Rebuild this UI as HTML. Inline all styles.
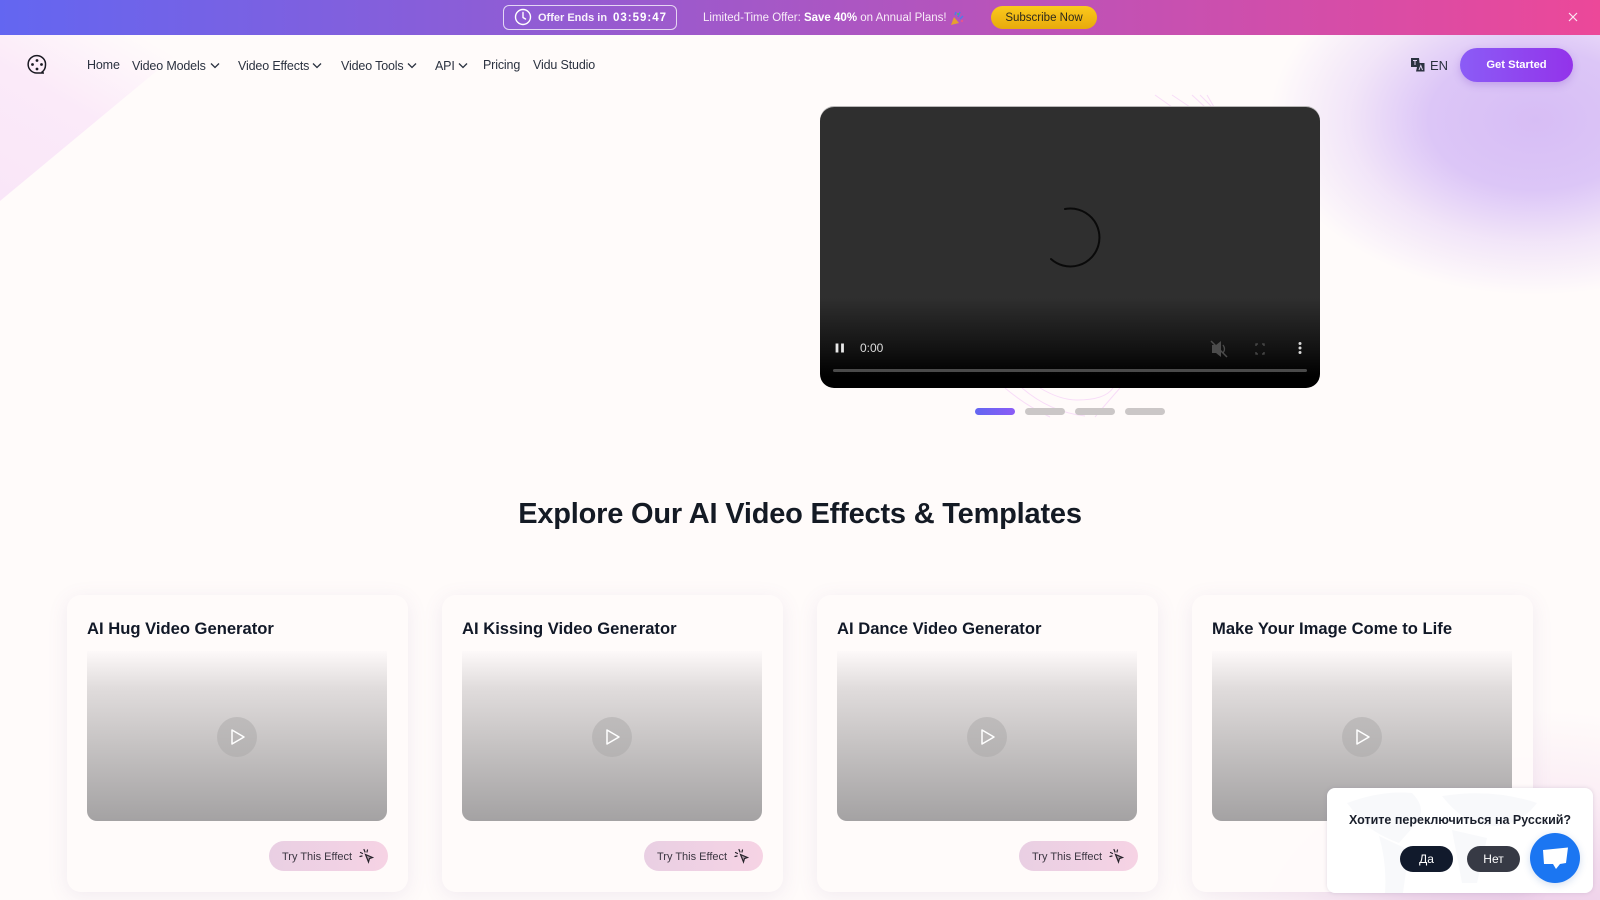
<!DOCTYPE html>
<html lang="en"><head><meta charset="utf-8"><title>Vidu</title>
<style>
*{box-sizing:border-box;margin:0;padding:0}
html,body{width:1600px;height:900px;overflow:hidden;background:#fffbfa;font-family:"Liberation Sans","Noto Sans CJK SC",sans-serif;color:#1f2937}
#root{position:relative;width:1600px;height:900px;overflow:hidden;background:
radial-gradient(ellipse 265px 175px at 1535px 120px,#d7bdf5 0,#dcc6f7 40%,rgba(236,220,248,.7) 70%,rgba(255,251,250,0) 100%),
radial-gradient(ellipse 340px 240px at 1530px 950px,#ecc9e8 0,#f2d9ec 40%,rgba(250,235,244,.7) 70%,rgba(255,251,250,0) 100%),
#fffbfa}
.a{position:absolute;white-space:nowrap}
.nav{position:absolute;top:57px;font-size:12.5px;letter-spacing:-.15px;line-height:16px;color:#2b3240;white-space:nowrap}
.card{position:absolute;top:595px;width:341px;height:297px;background:rgba(255,251,250,.92);border-radius:14px;box-shadow:0 4px 20px rgba(120,90,160,.10)}
.card h3{position:absolute;left:20px;top:24px;font-size:16.6px;line-height:20px;color:#111827;white-space:nowrap}
.thumb{position:absolute;left:20px;top:56px;width:300px;height:170px;border-radius:0 0 10px 10px;background:linear-gradient(#fdf9f9 0,#e0dcdc 22%,#c6c3c3 55%,#a4a2a3 100%)}
.play{position:absolute;left:130px;top:66px;width:40px;height:40px;border-radius:50%;background:rgba(170,168,168,.5)}
.play svg{position:absolute;left:0;top:0}
.try{position:absolute;left:202px;top:246px;width:119px;height:30px;border-radius:15px;background:linear-gradient(90deg,#e9cfe3,#f6d3e4);font-size:11px;line-height:32px;color:#3a3540;padding-left:13px;white-space:nowrap}
.try svg{position:absolute;left:90px;top:7px}
.dot{position:absolute;top:408px;width:40px;height:7px;border-radius:4px;background:#cbc7c7}
</style></head>
<body><div id="root">
<svg class="a" style="left:0;top:35px" width="260" height="175"><defs><linearGradient id="t" x1="0" y1="1" x2="0.7" y2="0"><stop offset="0" stop-color="#f9e6f8"/><stop offset=".55" stop-color="#fbeaf9"/><stop offset="1" stop-color="#fffbfa"/></linearGradient></defs><polygon points="0,0 200,0 0,166" fill="url(#t)"/></svg>
<svg class="a" style="left:0;top:0" width="1600" height="430" fill="none" stroke="#f8dcf8" stroke-width="1"><path d="M1155 95L1172 107M1172 95L1190 107M1192 95L1205 107M1200 95L1212 107M1207 95L1214 107"/><path d="M1005 388Q1025 405 1050 417M1022 388Q1050 412 1085 416M1040 388Q1060 400 1077 400Q1105 400 1113 388M1120 388Q1105 405 1095 417"/></svg>

<div class="a" style="left:0;top:0;width:1600px;height:35px;background:linear-gradient(90deg,#6366f1,#ec4899)"></div>
<div class="a" style="left:503px;top:5px;width:174px;height:25px;border:1px solid rgba(255,255,255,.75);border-radius:6px"></div>
<svg class="a" style="left:513px;top:7px" width="20" height="20" fill="none" stroke="#fff" stroke-width="1.4" stroke-linecap="round" stroke-linejoin="round"><circle cx="10" cy="10" r="7.500"/><path d="M10 5.500V10.500L12.500 12"/></svg>
<div class="a" style="left:538px;top:11px;font-size:11px;line-height:15px;font-weight:bold;color:#f8f2fc">Offer Ends in</div>
<div class="a" style="left:613px;top:11px;font-size:11.5px;line-height:15px;font-weight:bold;color:#fff;letter-spacing:1px">03:59:47</div>
<div class="a" style="left:703px;top:11px;font-size:11.5px;line-height:15px;color:#f8ecf8">Limited-Time Offer: <b style="color:#fff">Save 40%</b> on Annual Plans!</div>
<svg class="a" style="left:950px;top:10px" width="14" height="16"><path d="M1 15L4 7L9 13Z" fill="#e5a02e"/><path d="M8 7L10 2M10 9L13 6M5 5L6 2" stroke="#4f7ce8" stroke-width="1.500"/><circle cx="12" cy="11" r="1.200" fill="#e5548f"/><circle cx="8" cy="4" r="1" fill="#49b86a"/></svg>
<div class="a" style="left:991px;top:6px;width:106px;height:23px;border-radius:12px;background:linear-gradient(#fbc91c,#e8aa0b);font-size:11.5px;line-height:24px;text-align:center;color:#2d2a1c">Subscribe Now</div>
<svg class="a" style="left:1567px;top:11px" width="12" height="12" stroke="#fbe6f2" stroke-width="1.200"><path d="M2 2L10 10M10 2L2 10"/></svg>

<svg class="a" style="left:26px;top:54px" width="22" height="22" fill="none" stroke="#1a1a22" stroke-width="1.500"><path d="M18 19H11A8.700 8.700 0 1 1 19.500 11C19.500 14 18.500 16.500 15.500 18.500"/><g fill="#1a1a22" stroke="none"><circle cx="11" cy="6.500" r="1.400"/><circle cx="6.500" cy="10.500" r="1.400"/><circle cx="15.500" cy="10.500" r="1.400"/><circle cx="11" cy="15" r="1.400"/></g></svg>
<div class="nav" style="left:87px">Home</div>
<div class="nav" style="left:132px;top:58px">Video Models</div>
<div class="nav" style="left:238px;top:58px">Video Effects</div>
<div class="nav" style="left:341px;top:58px">Video Tools</div>
<div class="nav" style="left:435px;top:58px">API</div>
<div class="nav" style="left:483px">Pricing</div>
<div class="nav" style="left:533px">Vidu Studio</div>
<svg class="a" style="left:0;top:0" width="500" height="80" fill="none" stroke="#2b3240" stroke-width="1.300"><path d="M211 63.500L215 67.500L219 63.500M313 63.500L317 67.500L321 63.500M408 63.500L412 67.500L416 63.500M459 63.500L463 67.500L467 63.500"/></svg>
<svg class="a" style="left:1410px;top:57px" width="16" height="16"><path d="M1 1H9L10 10H1Z" fill="#2b3240"/><path d="M8 6H14.500V14.500H6L7 10" fill="#2b3240"/><path d="M3 3.500H7M5 3.500V8" stroke="#e3d4f5" stroke-width="1"/><path d="M9 13L10.800 8.500L12.500 13" stroke="#e3d4f5" stroke-width="1" fill="none"/></svg>
<div class="a" style="left:1430px;top:57px;font-size:13px;line-height:17px;color:#2b3240">EN</div>
<div class="a" style="left:1460px;top:48px;width:113px;height:34px;border-radius:17px;background:linear-gradient(90deg,#8b5cf6,#9333ea);box-shadow:0 3px 8px rgba(120,60,200,.25);color:#fff;font-size:11.2px;font-weight:bold;line-height:35px;text-align:center">Get Started</div>

<div class="a" style="left:820px;top:107px;width:500px;height:281px;border-radius:14px;overflow:hidden;background:linear-gradient(#2f2f2f 0,#2f2f2f 68%,#141414 85%,#000 96%);box-shadow:0 -1px 0 #b9b7b7">
<svg class="a" style="left:0;top:0" width="500" height="281" fill="none"><path d="M245 102A29 29 0 1 1 231 152" stroke="#0a0a0a" stroke-width="2" stroke-linecap="round"/><path d="M17 236.500V245.500M22.500 236.500V245.500" stroke="#e8e8e8" stroke-width="2.800"/><g fill="#4c4c4c"><path d="M392 238H396L401 234V250L396 246H392Z"/></g><path d="M391 234L407 250" stroke="#4c4c4c" stroke-width="1.500"/><path d="M403 238Q406 242 403 246" stroke="#4c4c4c" stroke-width="1.300"/><path d="M436 239V237H438M442 237H444V239M444 245V247H442M438 247H436V245" stroke="#4c4c4c" stroke-width="1.300"/><g fill="#d8d8d8"><circle cx="480" cy="236.500" r="1.500"/><circle cx="480" cy="241" r="1.500"/><circle cx="480" cy="245.500" r="1.500"/></g><rect x="13" y="262" width="474" height="3" rx="1.500" fill="#4a4a4a"/></svg>
<div class="a" style="left:40px;top:234px;font-size:12px;line-height:14px;color:#dcdcdc">0:00</div>
</div>
<div class="dot" style="left:975px;background:linear-gradient(90deg,#6366f1,#8b5cf6)"></div>
<div class="dot" style="left:1025px"></div><div class="dot" style="left:1075px"></div><div class="dot" style="left:1125px"></div>

<div class="a" style="left:0;top:496px;width:1600px;text-align:center;font-size:29px;line-height:36px;color:#141a24;font-weight:bold;letter-spacing:-.2px">Explore Our AI Video Effects &amp; Templates</div>

<div class="card" style="left:67px"><h3>AI Hug Video Generator</h3><div class="thumb"><div class="play"><svg width="40" height="40" fill="none" stroke="#fff" stroke-width="1.500" stroke-linejoin="round"><path d="M15 13V27L27 20Z"/></svg></div></div><div class="try">Try This Effect<svg width="15" height="16" fill="none" stroke="#26232b" stroke-width="1.200" stroke-linecap="round"><path d="M6.500 6.500L13.500 9.500L10.500 10.500L9.500 14Z" fill="#26232b" fill-opacity=".35"/><path d="M5 1.500L6 4M1.500 4.500L3.500 5.500M1 8.500L3 8M8.500 2L8 4"/></svg></div></div>
<div class="card" style="left:442px"><h3>AI Kissing Video Generator</h3><div class="thumb"><div class="play"><svg width="40" height="40" fill="none" stroke="#fff" stroke-width="1.500" stroke-linejoin="round"><path d="M15 13V27L27 20Z"/></svg></div></div><div class="try">Try This Effect<svg width="15" height="16" fill="none" stroke="#26232b" stroke-width="1.200" stroke-linecap="round"><path d="M6.500 6.500L13.500 9.500L10.500 10.500L9.500 14Z" fill="#26232b" fill-opacity=".35"/><path d="M5 1.500L6 4M1.500 4.500L3.500 5.500M1 8.500L3 8M8.500 2L8 4"/></svg></div></div>
<div class="card" style="left:817px"><h3>AI Dance Video Generator</h3><div class="thumb"><div class="play"><svg width="40" height="40" fill="none" stroke="#fff" stroke-width="1.500" stroke-linejoin="round"><path d="M15 13V27L27 20Z"/></svg></div></div><div class="try">Try This Effect<svg width="15" height="16" fill="none" stroke="#26232b" stroke-width="1.200" stroke-linecap="round"><path d="M6.500 6.500L13.500 9.500L10.500 10.500L9.500 14Z" fill="#26232b" fill-opacity=".35"/><path d="M5 1.500L6 4M1.500 4.500L3.500 5.500M1 8.500L3 8M8.500 2L8 4"/></svg></div></div>
<div class="card" style="left:1192px"><h3>Make Your Image Come to Life</h3><div class="thumb"><div class="play"><svg width="40" height="40" fill="none" stroke="#fff" stroke-width="1.500" stroke-linejoin="round"><path d="M15 13V27L27 20Z"/></svg></div></div></div>

<div class="a" style="left:1327px;top:788px;width:266px;height:105px;border-radius:8px;background:#fff;box-shadow:0 0 4px rgba(120,110,140,.22);overflow:hidden">
<svg class="a" style="left:0;top:0" width="266" height="105" fill="#f8f9fb"><path d="M20 15Q55 2 85 5Q100 20 90 35Q78 48 72 55Q45 45 32 30Z"/><path d="M52 48L82 62L76 105H58Q60 75 52 48Z"/><path d="M115 8Q165 0 210 15Q195 35 170 38Q140 40 115 8Z"/><path d="M125 42L160 50L150 95L135 95Z"/></svg>
<div class="a" style="left:22px;top:24px;font-size:12.5px;line-height:16px;font-weight:bold;color:#1a1f2b">Хотите переключиться на Русский?</div>
<div class="a" style="left:73px;top:58px;width:53px;height:26px;border-radius:13px;background:#111a2c;color:#fff;font-size:12px;line-height:27px;text-align:center">Да</div>
<div class="a" style="left:140px;top:58px;width:53px;height:26px;border-radius:13px;background:#373a45;color:#fff;font-size:12px;line-height:27px;text-align:center">Нет</div>
</div>
<div class="a" style="left:1530px;top:833px;width:50px;height:50px;border-radius:50%;background:#1b76f2;box-shadow:0 2px 8px rgba(30,90,180,.2)"></div>
<svg class="a" style="left:1540px;top:846px" width="30" height="26" fill="#fff"><path d="M3 4L28 1.500L26 17L20 18L16 23L13 18L4 18Z"/></svg>
</div></body></html>
